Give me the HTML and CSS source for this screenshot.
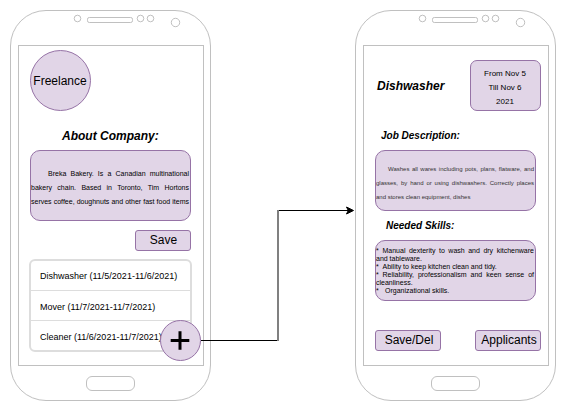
FILE: index.html
```html
<!DOCTYPE html>
<html lang="en">
<head>
<meta charset="utf-8">
<title>Freelance</title>
<link rel="stylesheet" href="styles.css">
</head>
<body>
<main class="board">
  <section class="phone">
    <svg class="sensors" width="199" height="34" viewBox="11 11 199 34">
      <circle cx="77.5" cy="18.5" r="3.3"/><rect x="87.5" y="17.5" width="45" height="5" rx="1.8"/>
      <circle cx="140.5" cy="18.5" r="3.3"/><circle cx="150.5" cy="18.5" r="3.3"/><circle cx="175.5" cy="22.5" r="4.2"/>
    </svg>
    <div class="screen">
      <div class="logo">Freelance</div>
      <h1 class="title about">About Company:</h1>
      <div class="box company">
        <p class="line first fill">Breka Bakery. Is a Canadian multinational</p>
        <p class="line fill">bakery chain. Based in Toronto, Tim Hortons</p>
        <p class="line fill">serves coffee, doughnuts and other fast food items</p>
      </div>
      <button class="btn save">Save</button>
      <ul class="jobs">
        <li>Dishwasher (11/5/2021-11/6/2021)</li>
        <li>Mover (11/7/2021-11/7/2021)</li>
        <li>Cleaner (11/6/2021-11/7/2021)</li>
      </ul>
      <button class="add" aria-label="Add"><svg width="39" height="39" viewBox="0 0 39 39"><path d="M9.7 19.5H28.3M19 10.2V28.8"/></svg></button>
    </div>
    <div class="home"></div>
  </section>

  <section class="phone">
    <svg class="sensors" width="199" height="34" viewBox="11 11 199 34">
      <circle cx="77.5" cy="18.5" r="3.3"/><rect x="87.5" y="17.5" width="45" height="5" rx="1.8"/>
      <circle cx="140.5" cy="18.5" r="3.3"/><circle cx="150.5" cy="18.5" r="3.3"/><circle cx="175.5" cy="22.5" r="4.2"/>
    </svg>
    <div class="screen">
      <div class="top">
        <h1 class="title">Dishwasher</h1>
        <div class="box dates"><p>From Nov 5</p><p>Till Nov 6</p><p>2021</p></div>
      </div>
      <h2 class="title sub job">Job Description:</h2>
      <div class="box duties">
        <p class="line first fill">Washes all wares including pots, plans, flatware, and</p>
        <p class="line fill">glasses, by hand or using dishwashers. Correctly places</p>
        <p class="line">and stores clean equipment, dishes</p>
      </div>
      <h2 class="title sub needed">Needed Skills:</h2>
      <div class="box skills">
        <p class="line fill"><span class="star">*</span>Manual dexterity to wash and dry kitchenware</p>
        <p class="line">and tableware.</p>
        <p class="line"><span class="star">*</span>Ability to keep kitchen clean and tidy.</p>
        <p class="line fill"><span class="star">*</span>Reliability, professionalism and keen sense of</p>
        <p class="line">cleanliness.</p>
        <p class="line"><span class="star wide">*</span>Organizational skills.</p>
      </div>
      <div class="actions"><button class="btn">Save/Del</button><button class="btn">Applicants</button></div>
    </div>
    <div class="home"></div>
  </section>

  <svg class="link" width="567" height="411" viewBox="0 0 567 411">
    <path class="wire" d="M201 340.5H278.5M277.5 210.5H349"/>
    <path class="riser" d="M278 210V341"/>
    <path class="tip" d="M353.5 210.5L346.5 214L348.3 210.5L346.5 207Z"/>
  </svg>
</main>
</body>
</html>
```
FILE: styles.css
```css
* { box-sizing: border-box; margin: 0; padding: 0; }
body { background: #fff; color: #000; font-family: "Liberation Sans", Arial, sans-serif; font-size: 12px; }
.board { position: relative; display: flex; gap: 144px; width: 567px; height: 411px; padding: 10px; overflow: hidden; }
.phone { flex: none; display: flex; flex-direction: column; width: 201px; height: 391px; border: 1px solid #c0c0c0; border-radius: 36px; }
.sensors { display: block; flex: none; fill: none; stroke: #c0c0c0; }
.screen { position: relative; flex: none; width: 186px; height: 321px; margin-left: 7px; border: 1px solid #c0c0c0; }
.home { width: 49px; height: 15px; margin: 10px 0 0 75px; border: 1px solid #c0c0c0; border-radius: 6px; }

.box, .btn, .logo, .add { background: #e1d5e7; border: 1px solid #9673a6; }
.logo { display: flex; align-items: center; justify-content: center; width: 61px; height: 61px; margin: 4px 0 0 11px; padding-right: 1px; border-radius: 50%; }
.title { font-size: 12px; line-height: 14px; font-style: italic; font-weight: bold; white-space: nowrap; }
.about { margin: 18px 0 0 43px; }
.box { width: 161px; margin-left: 11px; border-radius: 10px; }
.line { white-space: nowrap; }
.fill { white-space: normal; text-align-last: justify; }

.company { height: 71px; margin-top: 7px; padding-top: 16px; font-size: 7px; line-height: 14px; }
.company .line { width: 158px; }
.company .first { padding-left: 17px; }
.btn { display: block; height: 21px; border-radius: 3px; font: 12px/19px "Liberation Sans", Arial, sans-serif; color: #000; text-align: center; white-space: nowrap; }
.save { width: 56px; margin: 9px 0 0 116px; padding-left: 1px; }
.jobs { width: 163px; height: 93px; margin: 8px 0 0 10px; border: 2px solid #ddd; border-radius: 6px; list-style: none; font-size: 9px; }
.jobs li { height: 29px; padding-left: 9px; line-height: 31px; white-space: nowrap; }
.jobs li + li { height: 30px; border-top: 1px solid #ddd; line-height: 32px; }
.add { position: absolute; left: 141px; top: 274px; width: 41px; height: 41px; border-radius: 50%; }
.add svg { display: block; stroke: #000; stroke-width: 3; }

.top { display: flex; justify-content: space-between; align-items: center; height: 51px; margin: 14px 7px 0 13px; }
.dates { width: 71px; height: 51px; margin: 0; padding: 6px 1px 0 0; border-radius: 7px; font-size: 8px; line-height: 14px; text-align: center; }
.sub { font-size: 10px; }
.job { margin: 18px 0 0 17px; }
.duties { height: 61px; margin-top: 7px; padding-top: 11px; font-size: 6px; line-height: 14px; color: #333; }
.duties .line { width: 158px; }
.duties .first { padding-left: 12px; }
.needed { margin: 8px 0 0 22px; }
.skills { height: 61px; margin-top: 7px; padding-top: 6px; font-size: 7px; line-height: 8px; }
.skills .line { width: 158px; }
.star { display: inline-block; width: 6.5px; text-align-last: left; }
.star.wide { width: 9px; }
.actions { display: flex; justify-content: space-between; margin: 29px 7px 0 11px; }
.actions .btn { width: 66px; padding-left: 2px; }

.link { position: absolute; left: 0; top: 0; fill: none; pointer-events: none; }
.wire { stroke: #000; }
.riser { stroke: #808080; stroke-width: 2; }
.tip { fill: #000; stroke: #000; }
```
